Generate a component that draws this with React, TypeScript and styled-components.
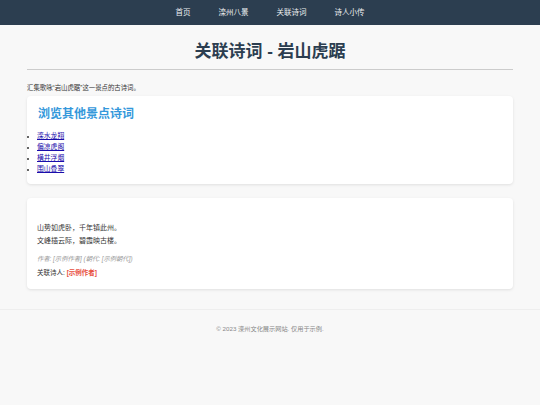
import React from 'react';
import styled, { createGlobalStyle } from 'styled-components';

const GlobalStyle = createGlobalStyle`
  body {
    margin: 0;
    background: #f8f8f8;
    font-family: "Liberation Sans", "Noto Sans CJK SC", sans-serif;
    color: #333;
  }
`;

const NavBar = styled.nav`
  height: 25px;
  background: #2c3e50;
  display: flex;
  align-items: center;
  justify-content: center;
`;

const NavLink = styled.a`
  color: #ecf0f1;
  font-size: 7.5px;
  line-height: 10px;
  margin: 0 14px;
  text-decoration: none;
`;

const Main = styled.main`
  width: 486px;
  margin: 0 auto;
`;

const PageTitle = styled.h1`
  margin: 16px 0 0;
  padding-bottom: 6px;
  border-bottom: 1px solid #ccc;
  font-size: 17px;
  line-height: 22px;
  font-weight: 700;
  color: #2c3e50;
  text-align: center;
`;

const Intro = styled.p`
  margin: 13px 0 3px;
  font-size: 6.4px;
  line-height: 10px;
  color: #333;
`;

const Card = styled.section<{ $top?: number; $pad: string }>`
  background: #fff;
  border-radius: 4px;
  box-shadow: 0 1px 3px rgba(0, 0, 0, 0.1);
  margin-top: ${(p) => p.$top ?? 0}px;
  padding: ${(p) => p.$pad};
`;

const CardTitle = styled.h2`
  margin: 0;
  font-size: 12px;
  line-height: 16px;
  font-weight: 700;
  color: #3498db;
`;

const SpotList = styled.ul`
  margin: 7.5px 0 0 -11px;
  padding-left: 10px;
  font-size: 6.8px;
  line-height: 11px;

  li::marker {
    font-size: 6px;
  }
`;

const SpotLink = styled.a`
  color: #1a0dab;
  text-decoration: underline;
`;

const PoemLine = styled.p`
  margin: 0;
  font-size: 7px;
  line-height: 13px;
  color: #333;
`;

const Meta = styled.p<{ $gap: number }>`
  margin: ${(p) => p.$gap}px 0 0;
  font-size: 6.3px;
  line-height: 10px;
  color: #999;
  font-style: italic;
`;

const Related = styled.p`
  margin: 4px 0 0;
  font-size: 6.5px;
  line-height: 10px;
  color: #333;
`;

const PoetLink = styled.a`
  color: #e74c3c;
  font-weight: 600;
  text-decoration: none;
`;

const Footer = styled.footer`
  margin-top: 20px;
  border-top: 1px solid #eee;
  padding-top: 14px;
  text-align: center;
  font-size: 6.2px;
  line-height: 10px;
  color: #888;
`;

const navItems = ['首页', '滦州八景', '关联诗词', '诗人小传'];
const spots = ['滦水龙翔', '偏凉虎阁', '横井浮烟', '围山叠翠'];
const poem = ['山势如虎卧，千年镇此州。', '文峰插云际，碧霞映古楼。'];

const App = () => (
  <>
    <GlobalStyle />
    <NavBar>
      {navItems.map((item) => (
        <NavLink key={item} href="#">
          {item}
        </NavLink>
      ))}
    </NavBar>
    <Main>
      <PageTitle>关联诗词 - 岩山虎踞</PageTitle>
      <Intro>汇集歌咏“岩山虎踞”这一景点的古诗词。</Intro>
      <Card $pad="10px 11px 10.5px">
        <CardTitle>浏览其他景点诗词</CardTitle>
        <SpotList>
          {spots.map((s) => (
            <li key={s}>
              <SpotLink href="#">{s}</SpotLink>
            </li>
          ))}
        </SpotList>
      </Card>
      <Card $top={14} $pad="22.5px 10px 11px">
        {poem.map((line) => (
          <PoemLine key={line}>{line}</PoemLine>
        ))}
        <Meta $gap={7.5}>作者: [示例作者] (朝代: [示例朝代])</Meta>
        <Related>
          关联诗人: <PoetLink href="#">[示例作者]</PoetLink>
        </Related>
      </Card>
    </Main>
    <Footer>© 2023 滦州文化展示网站. 仅用于示例.</Footer>
  </>
);

export default App;
